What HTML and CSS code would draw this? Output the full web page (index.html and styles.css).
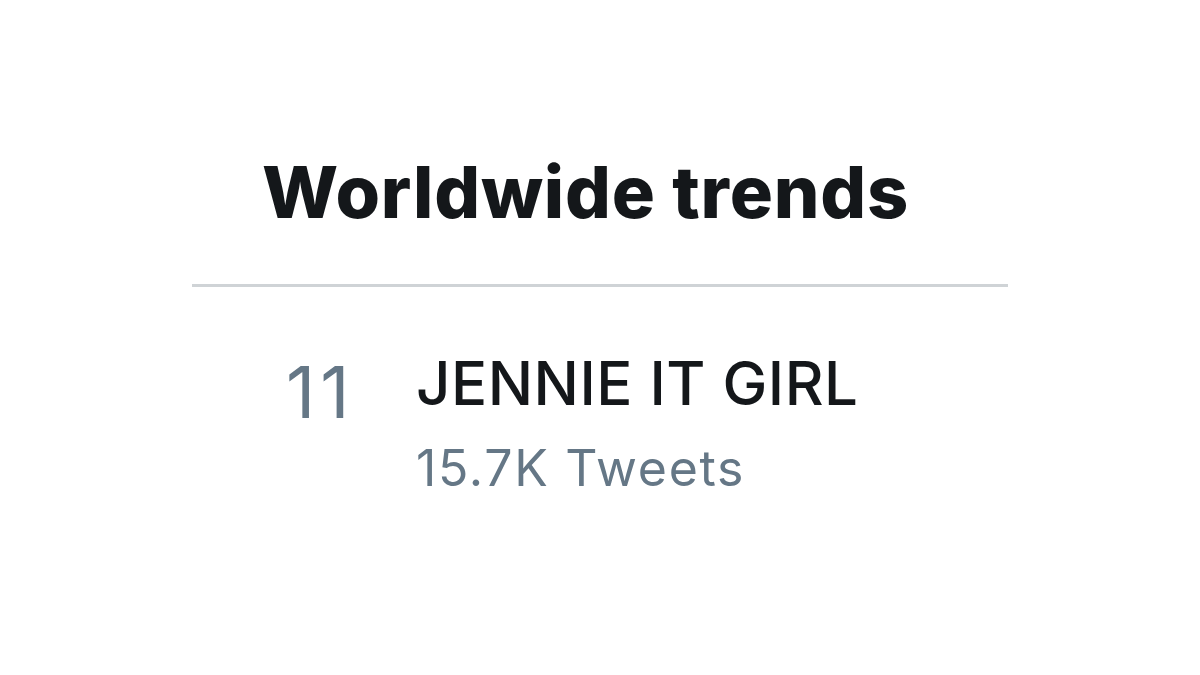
FILE: index.html
```html
<!DOCTYPE html>
<html>
<head>
<meta charset="utf-8">
<link rel="stylesheet" href="styles.css">
</head>
<body>
<div class="panel">
  <div class="panel-header">
    <h1 class="title">Worldwide trends</h1>
  </div>
  <div class="trend">
    <div class="trend-rank">11</div>
    <div class="trend-body">
      <div class="trend-name">JENNIE IT GIRL</div>
      <div class="trend-count">15.7K Tweets</div>
    </div>
  </div>
</div>
</body>
</html>
```
FILE: styles.css
```css
html, body {
  margin: 0;
  padding: 0;
  background: #ffffff;
}
body {
  width: 1200px;
  height: 675px;
  overflow: hidden;
  font-family: Inter, "Liberation Sans", Arial, sans-serif;
}
.panel {
  margin-left: 192px;
  width: 816px;
  padding-top: 152px;
}
.panel-header {
  padding-left: 70px;
  padding-bottom: 52px;
  border-bottom: 3px solid #cfd3d6;
}
.title {
  margin: 0;
  font-size: 72px;
  line-height: 80px;
  font-weight: 800;
  letter-spacing: 0.8px;
  color: #14171a;
}
.trend {
  display: flex;
  align-items: flex-start;
  padding-top: 61px;
  padding-left: 94px;
}
.trend-rank {
  width: 130px;
  margin-top: 8px;
  font-size: 72px;
  line-height: 72px;
  letter-spacing: 5px;
  color: #657786;
}
.trend-body {
  display: flex;
  flex-direction: column;
}
.trend-name {
  font-size: 60px;
  line-height: 70px;
  font-weight: 500;
  letter-spacing: 0.5px;
  color: #14171a;
}
.trend-count {
  margin-top: 20px;
  font-size: 50px;
  line-height: 60px;
  letter-spacing: 1.7px;
  color: #657786;
}
```
